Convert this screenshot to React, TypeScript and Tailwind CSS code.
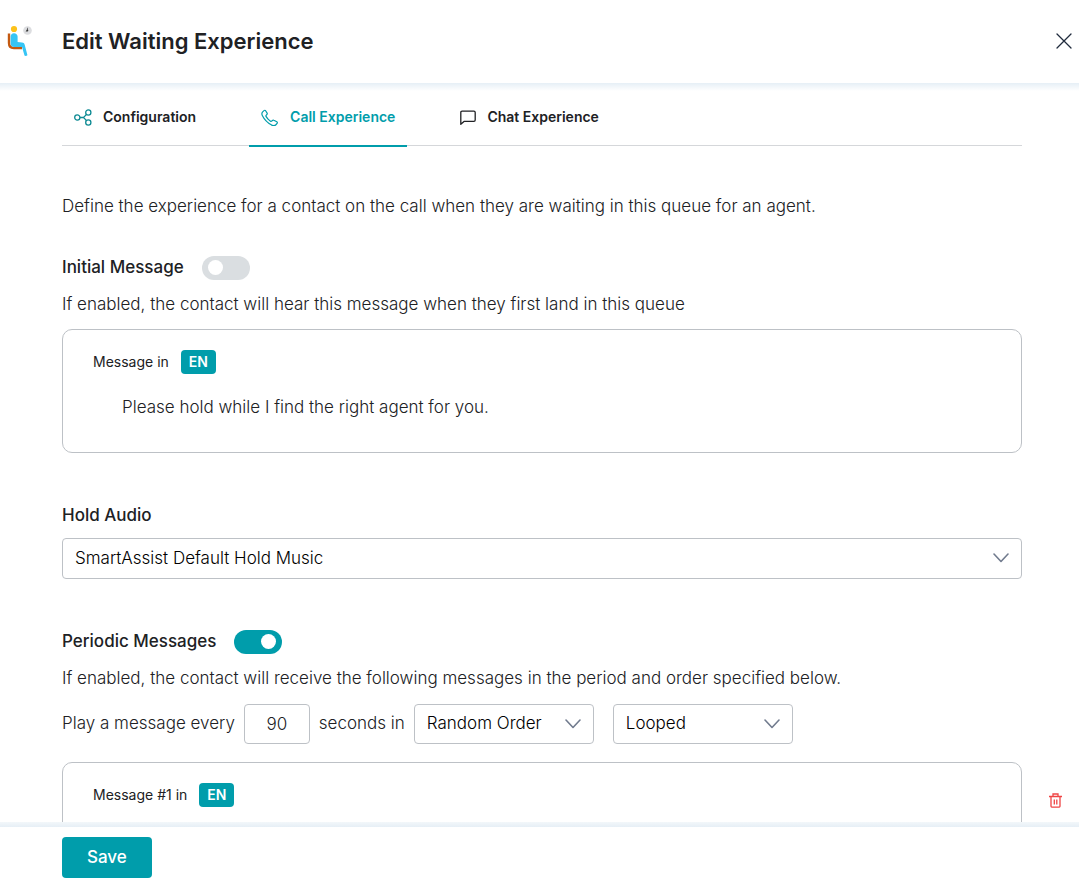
import React, { useState } from 'react';

type IconProps = { className?: string };

const WaitingIcon = () => (
  <svg width="26" height="32" viewBox="0 0 26 32" fill="none" aria-hidden="true">
    <path d="M2 8.500v9.500c0 3.200 1.800 5 4.800 5H15" stroke="#c45911" strokeWidth="2.400" />
    <circle cx="7" cy="4" r="3.100" fill="#fcc21b" />
    <path d="M3.600 11.500C3.600 9.500 5 8.200 7 8.200s3.600 1.300 3.600 3.300V17l4.400.5c1.500.1 2.300.8 2.700 2.200l2.700 10.300c.2.8-2.600 1.400-2.900.5L15 22H7.400c-2.300 0-3.800-1.400-3.800-3.600z" fill="#36c5f5" />
    <circle cx="20.500" cy="5.500" r="4.300" fill="#dcdde0" />
    <path d="M20.500 2.800V5.500L18.800 6.500" stroke="#555" strokeWidth=".8" />
    <circle cx="20.300" cy="5.600" r="1" fill="#333" />
  </svg>
);

const ConfigIcon = () => (
  <svg width="18" height="18" viewBox="0 0 18 18" fill="none" stroke="#0d8a93" strokeWidth="1.3" aria-hidden="true">
    <circle cx="3.300" cy="9.500" r="2.600" />
    <circle cx="14.300" cy="4.500" r="2.600" />
    <circle cx="14.300" cy="14.500" r="2.600" />
    <path d="M6 9.500H9.500M12.500 6.400 9.500 9.500l3 3.100" />
  </svg>
);

const PhoneIcon = () => (
  <svg width="18" height="18" viewBox="0 0 18 18" fill="none" stroke="#009dab" strokeWidth="1.2" strokeLinejoin="round" aria-hidden="true">
    <path d="M1.700 3.900 3 2.600c.5-.5 1.200-.4 1.600.1l1.500 2.400c.3.500.2 1-.2 1.400l-.8.800c-.3.300-.3.700-.1 1.100 1.100 2 2.400 3.400 4.500 4.800.4.300.9.300 1.200 0l.7-.7c.4-.4.9-.5 1.400-.2l3 1.500c.6.300.7 1 .3 1.500l-1 1.200c-1.100 1.200-2.900 1.400-4.400.6C6.500 14.700 3.300 11.500 1.300 7.400.7 6.200.8 4.800 1.700 3.900z" />
  </svg>
);

const ChatIcon = () => (
  <svg width="16" height="16" viewBox="0 0 16 16" fill="none" stroke="#202124" strokeWidth="1.3" strokeLinejoin="round" aria-hidden="true">
    <path d="M.800 15.200V3.500c0-.800.500-1.300 1.300-1.300h11.800c.8 0 1.300.5 1.300 1.300v7.600c0 .8-.5 1.300-1.300 1.300H4z" />
  </svg>
);

const CloseIcon = () => (
  <svg width="16" height="16" viewBox="0 0 16 16" fill="none" stroke="#202b3d" strokeWidth="1.3" strokeLinecap="round" aria-hidden="true">
    <path d="M1 1l14 14M15 1L1 15" />
  </svg>
);

const ChevronIcon = ({ className }: IconProps) => (
  <svg className={className} width="16" height="10" viewBox="0 0 16 10" fill="none" stroke="#717b8e" strokeWidth="1.6" strokeLinecap="round" strokeLinejoin="round" aria-hidden="true">
    <path d="M1 1l7 7.500L15 1" />
  </svg>
);

const TrashIcon = () => (
  <svg width="13" height="15" viewBox="0 0 13 15" fill="none" stroke="#ef4444" strokeWidth="1.300" aria-hidden="true">
    <path d="M0 3.500h13M4 3.200V1h5v2.200M2 3.800v9.500c0 .5.300.8.800.8h7.400c.5 0 .8-.3.800-.8V3.800M5.300 6.500v5M7.800 6.500v5" />
  </svg>
);

const TABS = [
  { id: 'config', label: 'Configuration', Icon: ConfigIcon },
  { id: 'call', label: 'Call Experience', Icon: PhoneIcon },
  { id: 'chat', label: 'Chat Experience', Icon: ChatIcon },
];

type ToggleProps = { id: string; checked: boolean; onChange: (value: boolean) => void };

const Toggle: React.FC<ToggleProps> = ({ id, checked, onChange }) => (
  <input
    id={id}
    type="checkbox"
    role="switch"
    checked={checked}
    onChange={(e) => onChange(e.target.checked)}
    className="h-6 w-12 shrink-0 cursor-pointer appearance-none rounded-full bg-[#dadee1] px-1.5 before:mt-1 before:block before:size-[15px] before:rounded-full before:bg-white checked:bg-[#009dab] checked:before:ml-auto"
  />
);

type SelectProps = { id?: string; label?: string; options: string[]; className: string };

const Select: React.FC<SelectProps> = ({ id, label, options, className }) => (
  <div className={`relative ${className}`}>
    <select
      id={id}
      aria-label={label}
      className="block h-full w-full appearance-none rounded border border-[#bdc1c6] bg-white pr-9 pl-3 text-[17px] font-light text-black"
    >
      {options.map((option) => (
        <option key={option}>{option}</option>
      ))}
    </select>
    <ChevronIcon className="pointer-events-none absolute top-[15px] right-[13px]" />
  </div>
);

const MessageCard: React.FC<{ title: string; text?: string }> = ({ title, text }) => (
  <div className="h-31 rounded-[10px] border border-[#bdc1c6] px-[30px] pt-5">
    <div className="flex items-center gap-3 text-sm">
      <span>{title}</span>
      <span className="rounded bg-[#009dab] px-2 leading-6 font-semibold text-white">EN</span>
    </div>
    {text && <p className="mt-[21px] pl-[29px] text-[17px] leading-6 font-light">{text}</p>}
  </div>
);

export default function App() {
  const [activeTab, setActiveTab] = useState('call');
  const [initial, setInitial] = useState(false);
  const [periodic, setPeriodic] = useState(true);

  return (
    <div className="flex h-screen flex-col bg-white font-[Inter,sans-serif] text-[#202124]">
      <header className="flex h-[83px] shrink-0 items-center px-[7px] pb-0.5">
        <WaitingIcon />
        <h1 className="ml-[29px] text-[22px] leading-7 font-semibold">Edit Waiting Experience</h1>
        <button type="button" aria-label="Close" className="ml-auto cursor-pointer">
          <CloseIcon />
        </button>
      </header>
      <div className="h-2 shrink-0 bg-linear-to-b from-[#e6eff6] to-white" />

      <main className="min-h-0 flex-1 overflow-hidden pr-[57px] pl-[62px]">
        <nav className="flex h-[55px] gap-[41px] border-b border-[#d5d7da]" role="tablist">
          {TABS.map(({ id, label, Icon }) => (
            <button
              key={id}
              type="button"
              role="tab"
              aria-selected={activeTab === id}
              onClick={() => setActiveTab(id)}
              className={`flex h-14 cursor-pointer items-center gap-[11px] border-b-2 px-3 pb-0.5 text-sm font-semibold ${
                activeTab === id ? 'border-[#009dab] text-[#009dab]' : 'border-transparent'
              }`}
            >
              <Icon />
              {label}
            </button>
          ))}
        </nav>

        <p className="mt-12 text-[17px] leading-6 font-light">
          Define the experience for a contact on the call when they are waiting in this queue for an agent.
        </p>

        <section className="mt-[37px]">
          <div className="flex items-center gap-[18px]">
            <label htmlFor="initial" className="pb-0.5 text-[17px] leading-6 font-medium">Initial Message</label>
            <Toggle id="initial" checked={initial} onChange={setInitial} />
          </div>
          <p className="mt-[11px] mb-[13px] text-[17px] leading-6 font-light">
            If enabled, the contact will hear this message when they first land in this queue
          </p>
          <MessageCard title="Message in" text="Please hold while I find the right agent for you." />
        </section>

        <section className="mt-[50px]">
          <label htmlFor="audio" className="block text-[17px] leading-6 font-medium">Hold Audio</label>
          <Select id="audio" className="mt-[11px] h-[41px]" options={['SmartAssist Default Hold Music']} />
        </section>

        <section className="mt-[50px]">
          <div className="flex items-center gap-[18px]">
            <label htmlFor="periodic" className="pb-0.5 text-[17px] leading-6 font-medium">Periodic Messages</label>
            <Toggle id="periodic" checked={periodic} onChange={setPeriodic} />
          </div>
          <p className="mt-[11px] text-[17px] leading-6 font-light">
            If enabled, the contact will receive the following messages in the period and order specified below.
          </p>
          <div className="mt-[14px] mb-[18px] flex items-center gap-[9px] text-[17px] font-light">
            <label htmlFor="period">Play a message every</label>
            <input
              id="period"
              defaultValue="90"
              className="h-10 w-[66px] rounded border border-[#bdc1c6] text-center"
            />
            <span>seconds in</span>
            <Select label="Order" className="h-10 w-[180px]" options={['Random Order', 'Sequential Order']} />
            <Select label="Repeat" className="ml-2.5 h-10 w-[180px]" options={['Looped', 'Once']} />
          </div>
          <div className="relative">
            <MessageCard title="Message #1 in" />
            <button type="button" aria-label="Delete message" className="absolute top-[31px] -right-10 cursor-pointer">
              <TrashIcon />
            </button>
          </div>
        </section>
      </main>

      <div className="h-[5px] shrink-0 bg-linear-to-b from-[#f3f7fa] to-[#e6eff6]" />
      <footer className="h-[52px] shrink-0 bg-white pt-2.5 pl-[62px]">
        <button type="button" className="h-[41px] cursor-pointer rounded bg-[#009dab] px-[25px] text-[17px] font-medium text-white">
          Save
        </button>
      </footer>
    </div>
  );
}
